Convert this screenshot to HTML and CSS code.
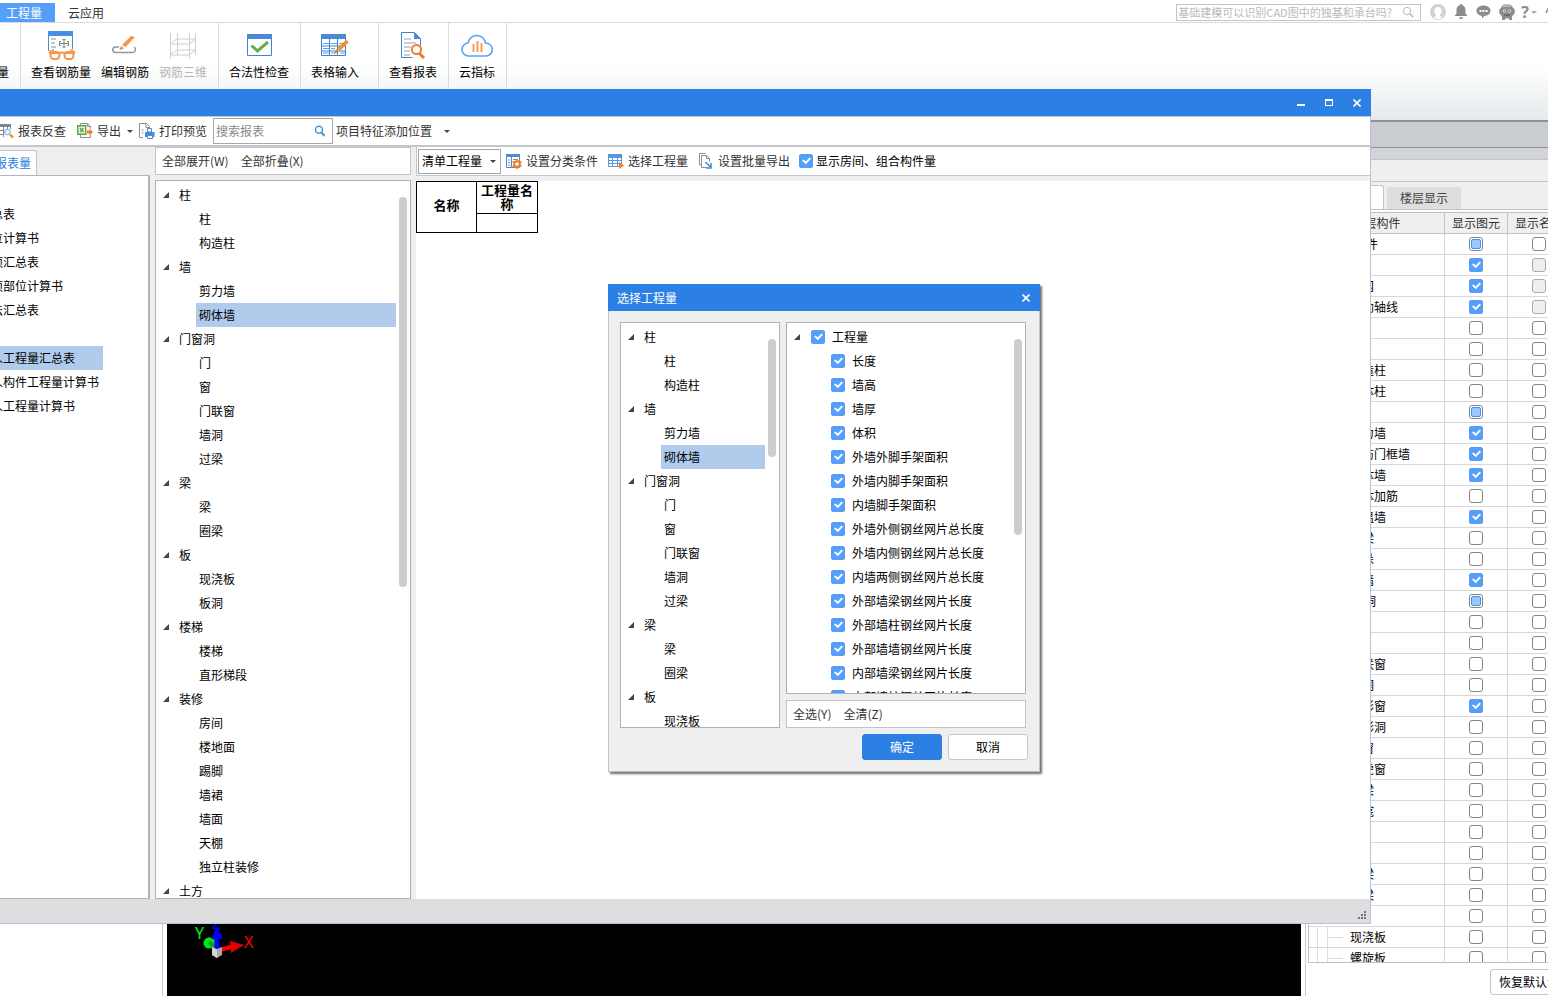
FILE: index.html
```html
<!DOCTYPE html>
<html lang="zh-CN">
<head>
<meta charset="utf-8">
<title>工程量</title>
<link rel="stylesheet" href="styles.css">
</head>
<body>
<div class="app">
  <header class="tabbar">
    <nav class="tabs">
      <button class="tab tab-active">工程量</button>
      <button class="tab">云应用</button>
    </nav>
    <div class="tools">
      <label class="help-search">
        <input type="text" aria-label="帮助搜索" placeholder="基础建模可以识别CAD图中的独基和承台吗?">
        <svg width="12" height="12" viewBox="0 0 12 12" fill="none" stroke="#b8b8b8"><circle cx="5" cy="5" r="3.7"/><path d="M7.7 7.7l3.5 3.5" stroke-width="1.5"/></svg>
      </label>
      <button class="tool" aria-label="用户"><svg width="16" height="16" viewBox="0 0 16 16"><circle cx="8" cy="8" r="8" fill="#d2d2d2"/><path d="M8 3c-2.4 0-3.7 1.700-3.700 4 0 1.800.7 3 1.700 3.700v1.300L3.500 13.600A8 8 0 0 0 12.500 13.600L10 12v-1.300c1-.7 1.700-1.900 1.700-3.700C11.700 4.700 10.400 3 8 3z" fill="#fff"/></svg></button>
      <button class="tool" aria-label="通知"><svg width="14" height="16" viewBox="0 0 14 16" fill="#8c8c8c"><path d="M7 0a1.200 1.200 0 0 1 1.200 1.300C10.500 2 11.500 4 11.500 6v3.500l2 2.500H.5l2-2.500V6c0-2 1-4 3.300-4.700A1.200 1.200 0 0 1 7 0zM5 13.200h4a2 2 0 0 1-4 0z"/></svg></button>
      <button class="tool" aria-label="消息"><svg width="15" height="14" viewBox="0 0 15 14"><path d="M7.500.5c4 0 7 2.300 7 5.300s-2.500 5-6 5.300l-2.500 2.400v-2.500C2.800 10.500.5 8.500.5 5.800.5 2.800 3.500.5 7.500.5z" fill="#8c8c8c"/><path d="M3.500 5h2v2h-2zM6.500 5h2v2h-2zM9.500 5h2v2h-2z" fill="#fff"/></svg></button>
      <button class="tool" aria-label="客服"><svg width="16" height="16" viewBox="0 0 16 16"><path d="M3 2l2-1.500h6L13 2l1 2 1.700 1.500v4L14 11l-1 2v3h-3v-1.500H6V16H3v-3l-1-2L.3 9.500v-4L2 4z" fill="#8c8c8c"/><path d="M4 3l1-1h6l1 1" stroke="#ddd" fill="none"/><circle cx="5.600" cy="7" r="1.700" fill="#ddd"/><circle cx="10.400" cy="7" r="1.700" fill="#ddd"/><circle cx="5.800" cy="7" r=".8" fill="#555"/><circle cx="10.200" cy="7" r=".8" fill="#555"/><path d="M5 10.500q3 2.500 6 0" stroke="#555" fill="none"/></svg></button>
      <button class="tool tool-help" aria-label="帮助">?<i class="caret"></i></button>
      <button class="tool tool-edge" aria-label="更多"><svg width="6" height="8" viewBox="0 0 6 8" stroke="#8c8c8c" stroke-width="1.500" fill="none"><path d="M1 5l2-4 3 4"/></svg></button>
    </div>
  </header>

  <div class="ribbon">
    <div class="group group-cut"><button class="cmd cmd-cut">量</button></div>
    <div class="group">
      <button class="cmd"><svg width="30" height="30" viewBox="0 0 30 30" fill="none"><path d="M2.500 20V1M26.500 1v17" stroke="#4a8bd8"/><path d="M2 0h25v5H2z" fill="#4a90e2"/><path d="M5 8h5M5 12h4M5 16h5" stroke="#8c8f94"/><path d="M13.500 12.500h9M18 8v9M15 10.500h-1.500v4H15M21 10.500h1.500v4H21M16.500 8.500h3M16.500 16h3" stroke="#7e8186"/><path d="M3 22q2-3 5-3M29 22q-2-3-5-3" stroke="#f79646" stroke-width="1.500"/><rect x="4.500" y="21" width="9" height="7" rx="3.200" stroke="#f79646" stroke-width="2"/><rect x="18.500" y="21" width="9" height="7" rx="3.200" stroke="#f79646" stroke-width="2"/><path d="M3 22h10q3-1 6 0h10" stroke="#f79646" stroke-width="2"/></svg>查看钢筋量</button>
      <button class="cmd"><svg width="30" height="30" viewBox="0 0 30 30" fill="none"><path d="M9 16H5a2.800 2.800 0 0 0 0 5.500h18a2.800 2.800 0 0 0 1-5.300" stroke="#8c98a5" stroke-width="1.500"/><path d="M12 14l9-9 4 1-9.500 10z" fill="#f79646"/><path d="M11 15l-1.500 4L14 17.500z" fill="#f0862c"/></svg>编辑钢筋</button>
      <button class="cmd cmd-off"><svg width="30" height="30" viewBox="0 0 30 30" fill="none" stroke="#cfcfcf"><path d="M2.500 2v26M9.500 2v22M21.500 2v26M27.500 2v22M2 13h19M9 8h19M2 24h19M9 19h19M2 13l7-5M21 13l7-5M2 24l7-5M21 24l7-5"/></svg>钢筋三维</button>
    </div>
    <div class="group">
      <button class="cmd"><svg width="30" height="30" viewBox="0 0 30 30" fill="none"><path d="M3.500 3.500h24v21h-24z" fill="#fff" stroke="#3f82d0"/><path d="M3 3h25v5H3z" fill="#4a8bd8"/><path d="M7.500 14.500l6 5.500L24 11" stroke="#68ad4d" stroke-width="3"/></svg>合法性检查</button>
    </div>
    <div class="group group-wide">
      <button class="cmd"><svg width="30" height="30" viewBox="0 0 30 30" fill="none"><path d="M1.500 3.500h24v21h-24z" fill="#fff" stroke="#3f82d0"/><path d="M1 3h25v5H1z" fill="#4a8bd8"/><path d="M3 12.500h6M11 12.500h6M19 12.500h4M3 17.500h6M11 17.500h4M3 22h6M11 22h4M20 22h5" stroke="#5ea0ea"/><path d="M9.500 8v16M17.500 8v16M2 15h23M2 20h23" stroke="#3f82d0"/><path d="M17 17L26 9l3 2-9 9z" fill="#f0932c"/><path d="M16.500 18l-2.500 5 5-2z" fill="#e87e1c"/></svg>表格输入</button>
    </div>
    <div class="group">
      <button class="cmd"><svg width="30" height="30" viewBox="0 0 30 30" fill="none"><path d="M3.500 1.500h13l6 6v7M3.500 1.500v25h11" stroke="#3f82d0"/><path d="M16 1v7h7z" fill="#4a8bd8"/><path d="M6 8h7M6 12h12M6 16h7M6 20h6M6 24h6" stroke="#98a2ad"/><circle cx="18.500" cy="18.500" r="4.600" stroke="#f07c2c" stroke-width="2"/><path d="M21.500 22.500l4.500 4.500" stroke="#f07c2c" stroke-width="3"/></svg>查看报表</button>
    </div>
    <div class="group">
      <button class="cmd"><svg width="32" height="30" viewBox="0 0 32 30" fill="none"><path d="M8 25a6.500 6.500 0 0 1-1-13C8 7 12 4.500 15.500 4.500c5 0 8.500 3.500 9 7.500A6.500 6.500 0 0 1 25 25z" stroke="#5aa5f5" stroke-width="1.600"/><path d="M12.500 13v8M16.500 10v11M20.500 12v9" stroke="#f79646" stroke-width="1.800"/></svg>云指标</button>
    </div>
  </div>

  <div class="docbar"></div>
  <div class="docbar docbar-thin"></div>

  <main class="workspace">
    <aside class="side"></aside>
    <section class="viewport">
      <svg class="axes" width="64" height="42" viewBox="0 0 64 42">
        <path d="M14 13l8 3-3 6-7-6z" fill="#0a8f1c"/><circle cx="14" cy="19" r="5.500" fill="#00e51b"/><path d="M14 18l9 9" stroke="#08a51c" stroke-width="4"/>
        <path d="M22 28V14" stroke="#0000ff" stroke-width="5"/><path d="M16.500 15L22 2l6 13z" fill="#0000f0"/>
        <path d="M25 26l14-4" stroke="#ff0000" stroke-width="4"/><path d="M35 17l14 4-13 8z" fill="#e00000"/>
        <path d="M17 23l5 2 5-2v8l-5 3-5-3z" fill="#aaa"/><path d="M17 23l5 3v8l-5-3z" fill="#d5d5d5"/>
        <text x="0" y="15" fill="#00f01c">Y</text><text x="17" y="5" fill="#0000ff">Z</text><text x="49" y="24" fill="#ff0000">X</text>
      </svg>
    </section>
    <aside class="panel">
      <div class="panel-head"></div>
      <div class="panel-tabs"><button class="ptab ptab-active" aria-label="图元显示"></button><button class="ptab">楼层显示</button></div>
      <div class="grid-wrap">
      <table class="grid">
        <thead><tr><th class="c-name">图层构件</th><th class="c-flag">显示图元</th><th class="c-flag">显示名称</th></tr></thead>
        <tbody>
          <tr><td class="root">所有构件</td><td><input type="checkbox" class="mixed" aria-label="图元"></td><td><input type="checkbox" aria-label="名称"></td></tr>
          <tr><td></td><td><input type="checkbox" checked aria-label="图元"></td><td><input type="checkbox" disabled aria-label="名称"></td></tr>
          <tr><td>轴网</td><td><input type="checkbox" checked aria-label="图元"></td><td><input type="checkbox" disabled aria-label="名称"></td></tr>
          <tr><td>辅助轴线</td><td><input type="checkbox" checked aria-label="图元"></td><td><input type="checkbox" disabled aria-label="名称"></td></tr>
          <tr><td></td><td><input type="checkbox" aria-label="图元"></td><td><input type="checkbox" aria-label="名称"></td></tr>
          <tr><td></td><td><input type="checkbox" aria-label="图元"></td><td><input type="checkbox" aria-label="名称"></td></tr>
          <tr><td>构造柱</td><td><input type="checkbox" aria-label="图元"></td><td><input type="checkbox" aria-label="名称"></td></tr>
          <tr><td>砌体柱</td><td><input type="checkbox" aria-label="图元"></td><td><input type="checkbox" aria-label="名称"></td></tr>
          <tr><td></td><td><input type="checkbox" class="mixed" aria-label="图元"></td><td><input type="checkbox" aria-label="名称"></td></tr>
          <tr><td>剪力墙</td><td><input type="checkbox" checked aria-label="图元"></td><td><input type="checkbox" aria-label="名称"></td></tr>
          <tr><td>人防门框墙</td><td><input type="checkbox" checked aria-label="图元"></td><td><input type="checkbox" aria-label="名称"></td></tr>
          <tr><td>砌体墙</td><td><input type="checkbox" checked aria-label="图元"></td><td><input type="checkbox" aria-label="名称"></td></tr>
          <tr><td>砌体加筋</td><td><input type="checkbox" aria-label="图元"></td><td><input type="checkbox" aria-label="名称"></td></tr>
          <tr><td>保温墙</td><td><input type="checkbox" checked aria-label="图元"></td><td><input type="checkbox" aria-label="名称"></td></tr>
          <tr><td>暗梁</td><td><input type="checkbox" aria-label="图元"></td><td><input type="checkbox" aria-label="名称"></td></tr>
          <tr><td>墙垛</td><td><input type="checkbox" aria-label="图元"></td><td><input type="checkbox" aria-label="名称"></td></tr>
          <tr><td>幕墙</td><td><input type="checkbox" checked aria-label="图元"></td><td><input type="checkbox" aria-label="名称"></td></tr>
          <tr><td class="branch">门窗洞</td><td><input type="checkbox" class="mixed" aria-label="图元"></td><td><input type="checkbox" aria-label="名称"></td></tr>
          <tr><td></td><td><input type="checkbox" aria-label="图元"></td><td><input type="checkbox" aria-label="名称"></td></tr>
          <tr><td></td><td><input type="checkbox" aria-label="图元"></td><td><input type="checkbox" aria-label="名称"></td></tr>
          <tr><td>门联窗</td><td><input type="checkbox" aria-label="图元"></td><td><input type="checkbox" aria-label="名称"></td></tr>
          <tr><td>墙洞</td><td><input type="checkbox" aria-label="图元"></td><td><input type="checkbox" aria-label="名称"></td></tr>
          <tr><td>带形窗</td><td><input type="checkbox" checked aria-label="图元"></td><td><input type="checkbox" aria-label="名称"></td></tr>
          <tr><td>带形洞</td><td><input type="checkbox" aria-label="图元"></td><td><input type="checkbox" aria-label="名称"></td></tr>
          <tr><td>飘窗</td><td><input type="checkbox" aria-label="图元"></td><td><input type="checkbox" aria-label="名称"></td></tr>
          <tr><td>老虎窗</td><td><input type="checkbox" aria-label="图元"></td><td><input type="checkbox" aria-label="名称"></td></tr>
          <tr><td>过梁</td><td><input type="checkbox" aria-label="图元"></td><td><input type="checkbox" aria-label="名称"></td></tr>
          <tr><td>壁龛</td><td><input type="checkbox" aria-label="图元"></td><td><input type="checkbox" aria-label="名称"></td></tr>
          <tr><td></td><td><input type="checkbox" aria-label="图元"></td><td><input type="checkbox" aria-label="名称"></td></tr>
          <tr><td></td><td><input type="checkbox" aria-label="图元"></td><td><input type="checkbox" aria-label="名称"></td></tr>
          <tr><td>连梁</td><td><input type="checkbox" aria-label="图元"></td><td><input type="checkbox" aria-label="名称"></td></tr>
          <tr><td>圈梁</td><td><input type="checkbox" aria-label="图元"></td><td><input type="checkbox" aria-label="名称"></td></tr>
          <tr><td></td><td><input type="checkbox" aria-label="图元"></td><td><input type="checkbox" aria-label="名称"></td></tr>
          <tr><td class="leaf">现浇板</td><td><input type="checkbox" aria-label="图元"></td><td><input type="checkbox" aria-label="名称"></td></tr>
          <tr><td class="leaf">螺旋板</td><td><input type="checkbox" aria-label="图元"></td><td><input type="checkbox" aria-label="名称"></td></tr>
        </tbody>
      </table>
      </div>
      <div class="panel-foot"><button class="btn">恢复默认设置</button></div>
    </aside>
  </main>

  <section class="window">
    <div class="titlebar">
      <button class="wbtn" aria-label="最小化"><svg width="8" height="8" viewBox="0 0 8 8"><path d="M0 5h8v2H0z" fill="#fff"/></svg></button>
      <button class="wbtn" aria-label="最大化"><svg width="8" height="8" viewBox="0 0 8 8"><path d="M0 0h8v7H0zM1 2v4h6V2z" fill="#fff" fill-rule="evenodd"/></svg></button>
      <button class="wbtn" aria-label="关闭"><svg width="8" height="8" viewBox="0 0 8 8"><path d="M.5.5l7 7M7.500.5l-7 7" stroke="#fff" stroke-width="1.600"/></svg></button>
    </div>
    <div class="toolbar">
      <button class="tbtn"><svg width="14" height="16" viewBox="0 0 14 16" fill="none"><path d="M0 1h11v3H0z" fill="#7e8790"/><path d="M0 7.500h4M0 11.500h4M3.500 4v10M7.500 4v2M10.500 4v2" stroke="#7e8790"/><circle cx="7.500" cy="9" r="2.800" fill="#eaf4ff" stroke="#68a8ee"/><path d="M10 11.500l3 3" stroke="#f09a2c" stroke-width="2.500"/></svg>报表反查</button>
      <button class="tbtn tbtn-export"><svg width="16" height="16" viewBox="0 0 16 16" fill="none"><path d="M3.500 2V.5h7l3 3v2M3.500 12v2.500h10V12" stroke="#8a9097"/><path d="M10.500.5v3h3" stroke="#8a9097"/><path d="M.7 2.700h8v8.600h-8z" fill="#eaf5e4" stroke="#5da344" stroke-width="1.400"/><path d="M3 5l3.500 4M6.500 5L3 9" stroke="#5da344" stroke-width="1.400"/><path d="M10 7.500h2.500V5.500L16 9l-3.500 3.500v-2H10z" fill="#f07c2c"/></svg>导出<i class="caret caret-dark"></i></button>
      <button class="tbtn tbtn-print"><svg width="16" height="16" viewBox="0 0 16 16" fill="none"><path d="M4 14.500H.5V.5h7l3 3v3" stroke="#8a9097"/><path d="M7 .5v4h4M2.500 7h2M2.500 10h2" stroke="#8a9097"/><path d="M6 9h9.500v5H6z" fill="#4a8bd8"/><path d="M8.500 5.500h4V9h-4zM8.500 12.500h5v3h-5z" fill="#fff" stroke="#4a8bd8"/></svg>打印预览</button>
      <label class="report-search"><input type="text" aria-label="搜索报表" placeholder="搜索报表"><svg width="12" height="12" viewBox="0 0 12 12" fill="none" stroke="#4a9ad0"><circle cx="5" cy="4.800" r="3.500" stroke-width="1.500"/><path d="M7.500 7.500l3 3.500" stroke-width="2"/></svg></label>
      <button class="tbtn tbtn-pos">项目特征添加位置<i class="caret caret-dark"></i></button>
    </div>
    <div class="content">
      <div class="reports">
        <button class="rtab">报表量</button>
        <ul class="report-list">
          <li>总表</li><li>位计算书</li><li>项汇总表</li><li>项部位计算书</li><li>法汇总表</li><li></li>
          <li class="picked">人工程量汇总表</li><li>人构件工程量计算书</li><li>人工程量计算书</li>
        </ul>
      </div>
      <div class="kinds">
        <div class="minibar"><button class="mini">全部展开(W)</button><button class="mini">全部折叠(X)</button></div>
        <div class="treebox">
          <ul class="tree">
            <li class="node">柱</li><li>柱</li><li>构造柱</li>
            <li class="node">墙</li><li>剪力墙</li><li class="picked">砌体墙</li>
            <li class="node">门窗洞</li><li>门</li><li>窗</li><li>门联窗</li><li>墙洞</li><li>过梁</li>
            <li class="node">梁</li><li>梁</li><li>圈梁</li>
            <li class="node">板</li><li>现浇板</li><li>板洞</li>
            <li class="node">楼梯</li><li>楼梯</li><li>直形梯段</li>
            <li class="node">装修</li><li>房间</li><li>楼地面</li><li>踢脚</li><li>墙裙</li><li>墙面</li><li>天棚</li><li>独立柱装修</li>
            <li class="node">土方</li>
          </ul>
          <div class="thumb thumb-kinds"></div>
        </div>
      </div>
      <div class="report">
        <div class="reportbar">
          <div class="pick"><select aria-label="工程量类型"><option>清单工程量</option></select><i class="caret caret-dark"></i></div>
          <button class="tbtn"><svg width="16" height="16" viewBox="0 0 16 16" fill="none"><path d="M.5 1.500h13v13H.5z" fill="#fff" stroke="#4a8bd8"/><path d="M0 1h14v3H0z" fill="#4a8bd8"/><path d="M5.500 4v10" stroke="#4a8bd8"/><path d="M2 7h2M2 9.500h2M2 12h2M7 6.500h5" stroke="#8a9097"/><circle cx="11" cy="11" r="2.800" fill="#fff" stroke="#f07c2c" stroke-width="2"/><path d="M11 6v2M11 14v2M6.500 8.500l2 1M13.500 12.500l2 1M15.500 8.500l-2 1M8.500 12.500l-2 1" stroke="#f07c2c" stroke-width="1.600"/></svg>设置分类条件</button>
          <button class="tbtn"><svg width="16" height="16" viewBox="0 0 16 16" fill="none"><path d="M.5 1.500h13v12H.5z" fill="#fff" stroke="#5a98dd"/><path d="M0 1h14v4H0z" fill="#5a98dd"/><path d="M1 7.500h12M1 10.500h12M4.500 5v8M9.500 5v8" stroke="#5a98dd"/><path d="M11 9l5 3.500-5 3.500z" fill="#f07c2c"/></svg>选择工程量</button>
          <button class="tbtn"><svg width="16" height="16" viewBox="0 0 16 16" fill="none"><path d="M3 12H1.500V.5h6" stroke="#8a9097"/><path d="M9 14.500H3.500v-12h5l3 3v3" stroke="#8a9097"/><path d="M8.500 2.500v3h3" stroke="#8a9097"/><path d="M7.500 9l5 5M13 10v5H8" stroke="#4a90c8" stroke-width="1.600"/></svg>设置批量导出</button>
          <label class="check"><input type="checkbox" checked>显示房间、组合构件量</label>
        </div>
        <div class="sheet">
          <table class="qty"><tr><th rowspan="2" class="q-name">名称</th><th class="q-val">工程量名称</th></tr><tr><td></td></tr></table>
        </div>
      </div>
    </div>
    <div class="statusbar"><svg width="10" height="10" viewBox="0 0 10 10" fill="#70737a"><path d="M7 0h2v2H7zM7 3h2v2H7zM7 6h2v2H7zM4 3h2v2H4zM4 6h2v2H4zM1 6h2v2H1z"/></svg></div>
  </section>

  <section class="dialog" role="dialog" aria-label="选择工程量">
    <div class="dtitle"><span>选择工程量</span><button class="wbtn" aria-label="关闭"><svg width="8" height="8" viewBox="0 0 8 8"><path d="M.5.5l7 7M7.500.5l-7 7" stroke="#fff" stroke-width="1.600"/></svg></button></div>
    <div class="dbody">
      <div class="treebox">
        <ul class="tree">
          <li class="node">柱</li><li>柱</li><li>构造柱</li>
          <li class="node">墙</li><li>剪力墙</li><li class="picked">砌体墙</li>
          <li class="node">门窗洞</li><li>门</li><li>窗</li><li>门联窗</li><li>墙洞</li><li>过梁</li>
          <li class="node">梁</li><li>梁</li><li>圈梁</li>
          <li class="node">板</li><li>现浇板</li>
        </ul>
        <div class="thumb thumb-left"></div>
      </div>
      <div class="dright">
        <div class="treebox">
          <ul class="tree tree-check">
            <li class="node"><label><input type="checkbox" checked>工程量</label></li>
            <li><label><input type="checkbox" checked>长度</label></li>
            <li><label><input type="checkbox" checked>墙高</label></li>
            <li><label><input type="checkbox" checked>墙厚</label></li>
            <li><label><input type="checkbox" checked>体积</label></li>
            <li><label><input type="checkbox" checked>外墙外脚手架面积</label></li>
            <li><label><input type="checkbox" checked>外墙内脚手架面积</label></li>
            <li><label><input type="checkbox" checked>内墙脚手架面积</label></li>
            <li><label><input type="checkbox" checked>外墙外侧钢丝网片总长度</label></li>
            <li><label><input type="checkbox" checked>外墙内侧钢丝网片总长度</label></li>
            <li><label><input type="checkbox" checked>内墙两侧钢丝网片总长度</label></li>
            <li><label><input type="checkbox" checked>外部墙梁钢丝网片长度</label></li>
            <li><label><input type="checkbox" checked>外部墙柱钢丝网片长度</label></li>
            <li><label><input type="checkbox" checked>外部墙墙钢丝网片长度</label></li>
            <li><label><input type="checkbox" checked>内部墙梁钢丝网片长度</label></li>
            <li><label><input type="checkbox" checked>内部墙柱钢丝网片长度</label></li>
          </ul>
          <div class="thumb thumb-right"></div>
        </div>
        <div class="minibar"><button class="mini">全选(Y)</button><button class="mini">全清(Z)</button></div>
      </div>
    </div>
    <div class="dfoot"><button class="btn btn-main">确定</button><button class="btn">取消</button></div>
  </section>
</div>
</body>
</html>
```

FILE: styles.css
```css
* { box-sizing: border-box; }
body {
  margin: 0;
  font: 12px/16px "Noto Sans CJK SC", sans-serif;
  color: #000;
}
button, input, select { font: inherit; color: inherit; margin: 0; padding: 0; }
button { background: none; border: 0; white-space: nowrap; }
ul { list-style: none; margin: 0; padding: 0; }
svg { flex: none; display: block; }

.app {
  position: relative;
  display: flex;
  flex-direction: column;
  height: 100vh;
  overflow: hidden;
  background: #fff;
}

/* tick boxes */
input[type="checkbox"] {
  appearance: none;
  display: block;
  flex: none;
  position: relative;
  width: 14px;
  height: 14px;
  border: 1px solid #858585;
  border-radius: 3px;
  background: #fff;
}
input[type="checkbox"]:disabled { background: #efefef; border-color: #aaa; }
input[type="checkbox"]:checked { background: #559ffb; border-color: #559ffb; border-radius: 2px; }
input[type="checkbox"]:checked::before {
  content: "";
  position: absolute;
  inset: 2px 1px 2px 2px;
  background: #fff;
  clip-path: polygon(0 45%, 18% 30%, 40% 55%, 84% 6%, 100% 22%, 42% 90%);
}
input.mixed::before {
  content: "";
  position: absolute;
  inset: 1px;
  border: 1px solid #3f92f5;
  border-radius: 2px;
  background: #9cc9fd;
}
.caret {
  display: inline-block;
  border: 3px solid transparent;
  border-top-color: #aaa;
  border-bottom: 0;
}
.caret-dark { border-top-color: #444; }

/* top tabs */
.tabbar {
  display: flex;
  justify-content: space-between;
  height: 23px;
  border-bottom: 1px solid #dadada;
}
.tabs { display: flex; align-items: flex-end; }
.tab { height: 19px; padding: 0 13px; color: #333; }
.tab-active { padding: 0 13px 0 6px; background: #559ffb; color: #fff; }
.tools { display: flex; align-items: center; gap: 8px; height: 24px; overflow: hidden; }
.help-search {
  display: flex;
  align-items: center;
  width: 245px;
  height: 17px;
  margin-right: 1px;
  padding: 0 6px 0 1px;
  border: 1px solid #c4c4c4;
}
.help-search input { flex: 1; min-width: 0; height: 15px; border: 0; background: none; font-size: 11px; }
.help-search input::placeholder { color: #bababa; }
.tool { display: flex; align-items: center; }
.tool-help { gap: 2px; margin-left: -2px; font: bold 16px/16px "Noto Sans", sans-serif; color: #8c8c8c; }
.tool-edge { width: 3px; overflow: hidden; }

/* ribbon */
.ribbon {
  display: flex;
  height: 97px;
  padding-bottom: 30px;
  background: linear-gradient(#fff 45%, #e4e9eb);
}
.group {
  display: flex;
  gap: 10px;
  padding: 0 11px 0 10px;
  border-right: 1px solid #d9dcde;
}
.group-cut { width: 21px; padding: 0; }
.group-wide { padding-right: 19px; }
.cmd {
  display: flex;
  flex-direction: column;
  align-items: center;
  gap: 3px;
  padding-top: 8px;
}
.cmd-cut { padding-top: 41px; margin-left: -3px; }
.cmd-off { color: #b5b5b5; }

.docbar { height: 28px; background: #c9ccd1; border-top: 2px solid #8e9196; border-bottom: 1px solid #8e9196; }
.docbar-thin { height: 12px; background: #d2d4da; border-top: 0; border-bottom-color: #c2c4c8; }

/* workspace behind the window */
.workspace {
  flex: 1;
  min-height: 0;
  display: grid;
  grid-template-columns: 163px 1fr 243px;
  column-gap: 4px;
  background: #fff;
}
.side { border-right: 1px solid #c9c9c9; }
.viewport { display: flex; align-items: flex-end; background: #000; }
.axes { margin: 0 0 30px 28px; font: 16px "Noto Sans", sans-serif; }
.panel { display: flex; flex-direction: column; min-width: 0; overflow: hidden; border-left: 1px solid #c9c9c9; }
.panel-head { height: 22px; background: #efefef; border-bottom: 1px solid #c4c4c4; }
.panel-tabs { display: flex; align-items: flex-end; gap: 3px; height: 28px; background: #efefef; border-bottom: 1px solid #c4c4c4; }
.ptab { height: 22px; padding: 0 13px; background: #dedede; border-radius: 3px 3px 0 0; color: #444; }
.ptab-active { width: 78px; height: 24px; background: #fff; border: 1px solid #c4c4c4; border-bottom: 0; }
.grid-wrap { flex: 1; min-height: 0; margin: 2px 0 0 2px; overflow: hidden; border: solid #c0c0c0; border-width: 1px 0 1px 1px; }
.grid { width: 262px; table-layout: fixed; border-collapse: separate; border-spacing: 0; }
.c-name { width: 136px; }
.c-flag { width: 63px; }
.grid th { height: 21px; padding: 0; background: #efefef; border: solid #c4c4c4; border-width: 0 1px 1px 0; font-weight: normal; color: #333; }
.grid td { height: 21px; padding: 0; border: solid #d8d8d8; border-width: 0 1px 1px 0; line-height: 20px; white-space: nowrap; }
.grid td:first-child { padding-left: 41px; }
.grid td.root { padding-left: 21px; }
.grid td.branch { padding-left: 31px; }
.grid td.leaf {
  background:
    linear-gradient(#ddd, #ddd) 8px 0 / 1px 100% no-repeat,
    linear-gradient(#ddd, #ddd) 18px 0 / 1px 100% no-repeat,
    linear-gradient(#ddd, #ddd) 18px 10px / 16px 1px no-repeat;
}
.grid input { margin: 0 auto; }
.panel-foot { height: 33px; padding: 6px 0 0 184px; }
.btn { width: 80px; height: 26px; background: #fff; border: 1px solid #c6c6c6; border-radius: 3px; }
.panel-foot .btn { width: auto; padding: 0 8px; }

/* report window */
.window {
  position: absolute;
  inset: 89px 177px 72px 0;
  display: flex;
  flex-direction: column;
  border: solid #b9c2d2;
  border-width: 0 1px 1px 0;
  background: #efefef;
}
.titlebar { display: flex; justify-content: flex-end; height: 27px; margin-right: -1px; background: #2d80e3; }
.wbtn { display: flex; align-items: center; justify-content: center; width: 28px; height: 27px; }
.toolbar {
  display: flex;
  align-items: center;
  height: 31px;
  background: #fff;
  border-top: 1px solid #c5c8cf;
  border-bottom: 2px solid #c3c7cd;
}
.tbtn { display: flex; align-items: center; gap: 4px; color: #333; }
.tbtn-export { margin-left: 11px; }
.tbtn-print { margin-left: 6px; }
.tbtn-export .caret { margin-left: 2px; }
.report-search {
  display: flex;
  align-items: center;
  width: 120px;
  height: 26px;
  margin: 0 3px 0 6px;
  padding: 0 6px 0 2px;
  border: 1px solid #a8a8a8;
  background: #fff;
}
.report-search input { flex: 1; min-width: 0; border: 0; background: none; }
.report-search input::placeholder { color: #8a8a8a; }
.tbtn-pos .caret { margin-left: 8px; }

.content { flex: 1; min-height: 0; display: grid; grid-template-columns: 150px 256px 1fr; column-gap: 5px; }
.reports, .kinds, .report { display: flex; flex-direction: column; min-width: 0; min-height: 0; }
.rtab {
  align-self: flex-start;
  height: 25px;
  margin: 3px 0 0 -7px;
  padding: 0 5px 0 1px;
  background: #fff;
  border: 1px solid #c0c4ca;
  border-bottom: 0;
  border-radius: 3px 3px 0 0;
  color: #2d80e3;
}
.report-list {
  flex: 1;
  padding-top: 26px;
  background: #fff;
  border: solid #b4b4b4;
  border-width: 1px 2px 1px 0;
}
.report-list li { height: 24px; width: 112px; margin-left: -9px; line-height: 24px; white-space: nowrap; }
.picked { background: #b1cbec; }

.minibar { display: flex; align-items: center; flex: none; gap: 12px; height: 28px; padding-left: 6px; background: #fff; border: 1px solid #c0c4ca; }
.mini { color: #333; }
.treebox { position: relative; flex: 1; min-height: 0; overflow: hidden; padding-top: 2px; background: #fff; border: 1px solid #b0b0b0; }
.kinds { gap: 5px; }
.tree li { height: 24px; margin: 0 14px 0 40px; padding-left: 3px; line-height: 24px; white-space: nowrap; }
.tree li.node { display: flex; align-items: center; gap: 10px; margin-left: 7px; padding: 0; }
.node::before {
  content: "";
  width: 6px;
  height: 6px;
  background: #444;
  clip-path: polygon(100% 0, 100% 100%, 0 100%);
}
.tree label { display: flex; align-items: center; gap: 7px; }
.tree-check li { padding-left: 4px; }
.tree.tree-check li.node { gap: 11px; }
.thumb { position: absolute; top: 16px; right: 3px; width: 8px; border-radius: 4px; background: #cdcdcd; }
.thumb-kinds { height: 390px; }
.thumb-left { height: 118px; }
.thumb-right { height: 196px; }

.reportbar {
  display: flex;
  align-items: center;
  gap: 10px;
  height: 29px;
  padding-left: 1px;
  background: #fff;
  border: solid #c3c7cd;
  border-width: 0 0 1px 1px;
}
.pick { position: relative; width: 83px; height: 25px; margin-right: -5px; }
.pick select { appearance: none; width: 100%; height: 100%; padding: 0 3px; border: 1px solid #a8a8a8; border-radius: 0; background: #fff; }
.pick .caret { position: absolute; right: 5px; top: 11px; }
.check { display: flex; align-items: center; gap: 3px; margin-left: -1px; }
.sheet { flex: 1; margin-top: 5px; background: #fff; }
.qty { width: 122px; table-layout: fixed; border-collapse: collapse; font-size: 13px; line-height: 14px; }
.qty th, .qty td { height: 19px; padding: 0; border: 1px solid #000; }
.qty .q-name { width: 60px; padding-bottom: 4px; }
.qty .q-val { height: 32px; padding: 0 3px 2px; }
.statusbar { display: flex; justify-content: flex-end; align-items: flex-end; height: 24px; padding: 0 3px 2px 0; background: #dedee0; }

/* quantity picker */
.dialog {
  position: absolute;
  left: 608px;
  top: 284px;
  width: 432px;
  background: #efefef;
  border: solid #b9c2d2;
  border-width: 0 1px 1px;
  box-shadow: 2px 2px 2px #707070;
}
.dtitle { display: flex; justify-content: space-between; align-items: center; height: 27px; margin: 0 -1px; padding-left: 9px; background: #2d80e3; color: #fff; }
.dbody { display: grid; grid-template-columns: 2fr 3fr; gap: 6px; height: 417px; padding: 11px 13px 0 11px; }
.dright { display: flex; flex-direction: column; gap: 6px; min-height: 0; }
.dfoot { display: flex; justify-content: flex-end; gap: 6px; padding: 6px 11px 11px; }
.btn-main { background: #2d80e3; border-color: #2d80e3; color: #fff; }
```
